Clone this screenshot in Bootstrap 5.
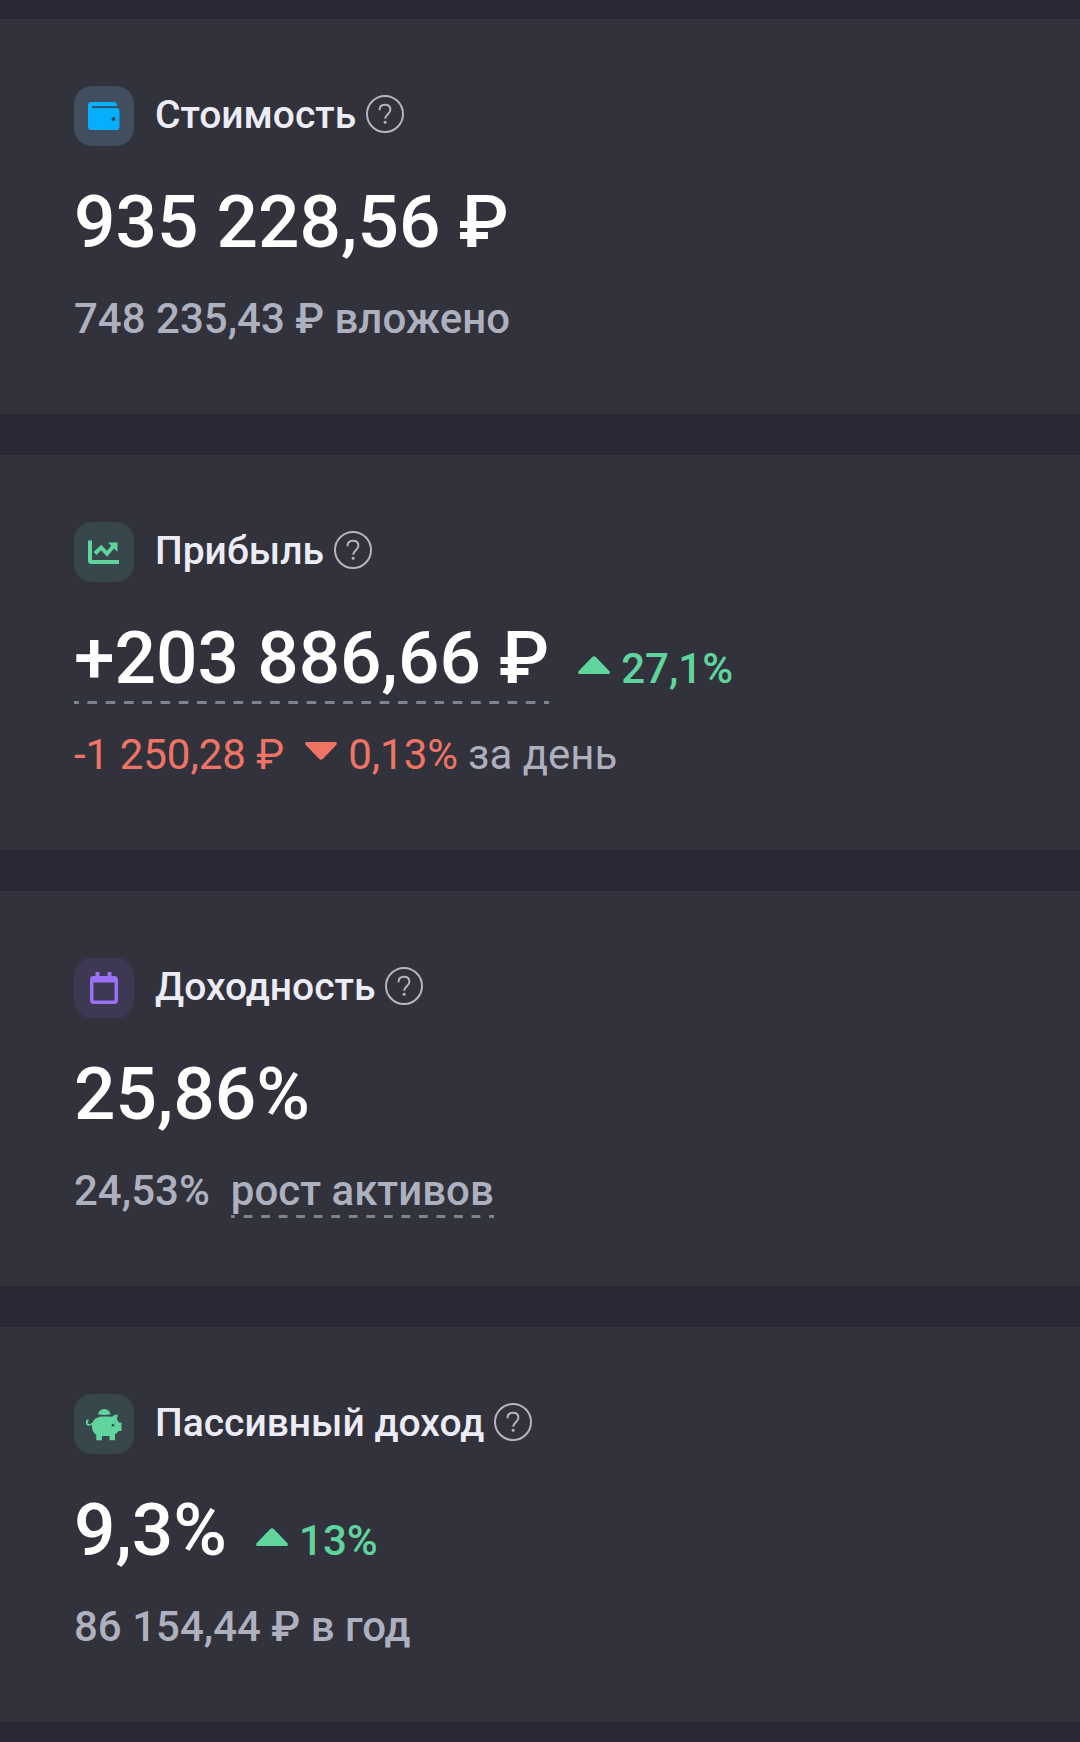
<!DOCTYPE html>
<html lang="ru" data-bs-theme="dark">
<head>
<meta charset="utf-8">
<meta name="viewport" content="width=device-width, initial-scale=1">
<title>Портфель</title>
<link href="https://cdn.jsdelivr.net/npm/bootstrap@5.3.0/dist/css/bootstrap.min.css" rel="stylesheet">
<style>
body { background: #2a2834; font-family: Roboto, "Noto Sans", sans-serif; font-weight: 500; }
.stat-list { gap: 41px; padding: 19px 0; }
.stat-card { background: #32323c; border: 0; border-radius: 0; padding: 67px 74px 70px; }
.stat-head { gap: 21px; height: 60px; }
.stat-icon { width: 60px; height: 60px; border-radius: 18px; }
.stat-icon svg, .help-btn svg, .trend { display: block; }
.tone-blue { background: #414e5e; color: #06aeff; }
.tone-green { background: #37474b; color: #5fd49c; }
.tone-violet { background: #3e3853; color: #9a70f5; }
.stat-title { font-size: 39px; line-height: 48px; font-weight: 500; color: #ececf6; padding-bottom: 2px; }
.help-btn { color: #b5b5c1; margin-left: -11px; padding: 0 0 4px; }
.stat-value { font-size: 73px; line-height: 88px; color: #fff; margin-top: 32px; }
.stat-note { font-size: 42px; line-height: 50px; color: #adb1bf; margin-top: 28px; }
.stat-delta { font-size: 42px; line-height: 50px; gap: 11px; }
.stat-value .stat-delta { margin-left: 29px; }
.stat-note .stat-delta, .stat-note .dashed { margin-left: 21px; }
.stat-note .stat-delta { margin-right: 10px; }
.up { color: #5fd49c; }
.down { color: #f07465; }
.regular { font-weight: 400; }
.dashed { color: inherit; text-decoration: none; padding-bottom: 2px; margin-bottom: -2px;
  background: linear-gradient(90deg, #80828f 25%, transparent 25% 75%, #80828f 75%) left bottom / 18px 3px round no-repeat; }
</style>
<script src="https://cdn.jsdelivr.net/npm/bootstrap@5.3.0/dist/js/bootstrap.bundle.min.js"></script>
</head>
<body>
<svg class="d-none" aria-hidden="true">
  <symbol id="help" viewBox="0 0 38 38">
    <circle cx="19" cy="19" r="18" fill="none" stroke="currentColor" stroke-width="2"/>
    <path d="M13.5 15.2c0-3.300 2.200-5.400 5.500-5.400s5.400 2 5.400 4.900c0 4.200-5.200 4.700-5.200 9" fill="none" stroke="currentColor" stroke-width="2"/>
    <circle cx="19.100" cy="27.300" r="1.500" fill="currentColor"/>
  </symbol>
  <symbol id="tri-up" viewBox="0 0 32 27">
    <path d="M2 18C0 18-.5 16 1 14.700L14 1.200q2-2 4 0L31 14.700C32.500 16 32 18 30 18z" fill="currentColor"/>
  </symbol>
  <symbol id="tri-down" viewBox="0 0 32 27">
    <path d="M2 0C0 0-.5 2 1 3.300L14 16.800q2 2 4 0L31 3.300C32.500 2 32 0 30 0z" fill="currentColor"/>
  </symbol>
</svg>
<main class="stat-list d-flex flex-column">

  <section class="stat-card card">
    <div class="stat-head d-flex align-items-center">
      <span class="stat-icon tone-blue"><svg width="60" height="60" viewBox="0 0 60 60">
        <path d="M17 16H40q3 0 3 3V20.500H18v1.500H42.500q3 0 3 3V41q0 3-3 3H17q-3 0-3-3V19q0-3 3-3z" fill="currentColor"/>
        <path d="M18 21.200H43.500" stroke="#2f4a5e" stroke-width="1.500"/>
        <circle cx="39.500" cy="33" r="2" fill="#2f4a5e"/></svg></span>
      <h2 class="stat-title mb-0">Стоимость</h2>
      <button type="button" class="help-btn border-0 bg-transparent" aria-label="Справка: стоимость"><svg width="38" height="38"><use href="#help"/></svg></button>
    </div>
    <div class="stat-value">935 228,56 ₽</div>
    <div class="stat-note">748 235,43 ₽ вложено</div>
  </section>

  <section class="stat-card card">
    <div class="stat-head d-flex align-items-center">
      <span class="stat-icon tone-green"><svg width="60" height="60" viewBox="0 0 60 60">
        <path d="M16 18.500V38.500q0 1.500 1.500 1.500H45" fill="none" stroke="currentColor" stroke-width="4"/>
        <path d="M21 31.500L27.200 25.500 33 31.800 40 23.500" fill="none" stroke="currentColor" stroke-width="4"/>
        <path d="M34 20.500H43.500V30z" fill="currentColor"/></svg></span>
      <h2 class="stat-title mb-0">Прибыль</h2>
      <button type="button" class="help-btn border-0 bg-transparent" aria-label="Справка: прибыль"><svg width="38" height="38"><use href="#help"/></svg></button>
    </div>
    <div class="stat-value d-flex align-items-baseline">
      <a href="#" class="dashed">+203 886,66 ₽</a>
      <span class="stat-delta up d-flex align-items-baseline"><svg class="trend" width="32" height="27"><use href="#tri-up"/></svg>27,1%</span>
    </div>
    <div class="stat-note regular d-flex align-items-baseline">
      <span class="down">-1 250,28 ₽</span>
      <span class="stat-delta down d-flex align-items-baseline"><svg class="trend" width="32" height="27"><use href="#tri-down"/></svg>0,13%</span>
      <span>за день</span>
    </div>
  </section>

  <section class="stat-card card">
    <div class="stat-head d-flex align-items-center">
      <span class="stat-icon tone-violet"><svg width="60" height="60" viewBox="0 0 60 60">
        <path d="M19 18h2.500v-4h4v4h8v-4h4v4H40q4 0 4 4V42q0 4-4 4H20q-4 0-4-4V22q0-4 3-4zM19.500 24.500V42.500H40.500V24.500z" fill="currentColor" fill-rule="evenodd"/></svg></span>
      <h2 class="stat-title mb-0">Доходность</h2>
      <button type="button" class="help-btn border-0 bg-transparent" aria-label="Справка: доходность"><svg width="38" height="38"><use href="#help"/></svg></button>
    </div>
    <div class="stat-value">25,86%</div>
    <div class="stat-note d-flex">
      <span>24,53%</span>
      <a href="#" class="dashed">рост активов</a>
    </div>
  </section>

  <section class="stat-card card">
    <div class="stat-head d-flex align-items-center">
      <span class="stat-icon tone-green"><svg width="60" height="60" viewBox="0 0 60 60">
        <path d="M24 20.500a6.300 6.300 0 0 1 12.500 0q-6 .8-12.500 0z" fill="currentColor"/>
        <path d="M14.500 26.200c-2.200.2-2.500 4.300.3 4.600q2.500 0 4.200-1.800" fill="none" stroke="currentColor" stroke-width="1.800"/>
        <path d="M18 31.500C18.500 26 22.500 22.500 28 22.500h7.500q1.500 0 2.500.3 2-2.300 5.700-2.300l-.7 5.200q1.200 1.100 1.800 2.800H47.500V37H44.500q-1 1.900-3.500 3.300V46.300H35.500V42H28V46.300H22.300V41Q17.500 37.500 18 31.500z" fill="currentColor"/>
        <circle cx="39" cy="31.300" r="1.300" fill="#37474b"/></svg></span>
      <h2 class="stat-title mb-0">Пассивный доход</h2>
      <button type="button" class="help-btn border-0 bg-transparent" aria-label="Справка: пассивный доход"><svg width="38" height="38"><use href="#help"/></svg></button>
    </div>
    <div class="stat-value d-flex align-items-baseline">
      <span>9,3%</span>
      <span class="stat-delta up d-flex align-items-baseline"><svg class="trend" width="32" height="27"><use href="#tri-up"/></svg>13%</span>
    </div>
    <div class="stat-note">86 154,44 ₽ в год</div>
  </section>

</main>
</body>
</html>
